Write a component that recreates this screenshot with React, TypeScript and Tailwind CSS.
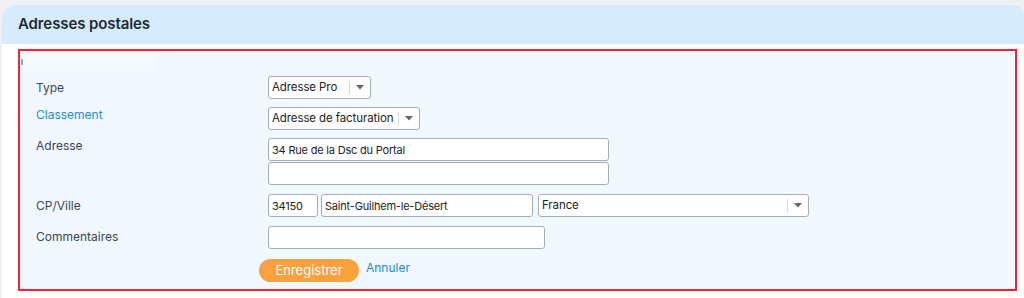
import * as React from 'react';

const labelCls = 'w-[232px] shrink-0 text-[12px] text-[#3f4550]';
const inputCls = 'h-[23px] border border-[#a9adb3] rounded-[3px] bg-white px-[3px] text-[11px] tracking-[-0.2px] text-[#222] outline-none';

function Select({ value, width }: { value: string; width: string }) {
  return (
    <div className={`flex h-[23px] items-stretch border border-[#a9adb3] rounded-[3px] bg-white ${width}`}>
      <div className="flex-1 flex items-center px-[3px] text-[11.5px] tracking-[-0.1px] text-[#222] whitespace-nowrap">{value}</div>
      <div className="w-[21px] flex items-center justify-center my-[4px] border-l border-[#d4d6da]">
        <svg width="8" height="5" viewBox="0 0 8 5">
          <path d="M0 0h8L4 4.5z" fill="#666" />
        </svg>
      </div>
    </div>
  );
}

export default function App() {
  return (
    <div className="h-[298px] w-[1024px] overflow-hidden bg-[#eef0f4] pt-[5px] pl-[2px]" style={{ fontFamily: 'Inter, "Open Sans", sans-serif' }}>
      <div className="h-full rounded-tl-[14px] rounded-tr-[10px] bg-white overflow-hidden">
        <div className="h-[39px] bg-[#d6ebfb] flex items-center pl-[16px]">
          <div className="text-[15px] font-semibold text-[#1f2937] tracking-[-0.1px]">Adresses postales</div>
        </div>
        <div className="pt-[5px] pl-[16px] pr-[7px]">
          <div className="h-[242px] border-2 border-[#f0233b] bg-[#f1f8ff] relative">
            <div className="absolute left-0 top-0 w-[137px] h-[20px] bg-[#f5faff]" />
            <div className="absolute left-[1px] top-[8px] w-[2px] h-[6px] bg-[#9aa0a8]" />
            <div className="pl-[16px] pt-[25px] flex flex-col">
              <div className="flex items-center h-[23px]">
                <div className={labelCls}>Type</div>
                <Select value="Adresse Pro" width="w-[103px]" />
              </div>
              <div className="flex items-center h-[23px] mt-[8px]">
                <div className={`${labelCls} !text-[#1c8fd0] -mt-[8px]`}>Classement</div>
                <Select value="Adresse de facturation" width="w-[152px]" />
              </div>
              <div className="flex mt-[8px]">
                <div className={`${labelCls} -mt-[1px]`}>Adresse</div>
                <div className="flex flex-col gap-[1px]">
                  <input readOnly value="34 Rue de la Dsc du Portal" className={`${inputCls} w-[341px]`} />
                  <input readOnly value="" className={`${inputCls} w-[341px]`} />
                </div>
              </div>
              <div className="flex items-center mt-[9px]">
                <div className={labelCls}>CP/Ville</div>
                <input readOnly value="34150" className={`${inputCls} w-[50px]`} />
                <input readOnly value="Saint-Guilhem-le-Désert" className={`${inputCls} w-[212px] ml-[3px]`} />
                <div className="ml-[5px]">
                  <Select value="France" width="w-[271px]" />
                </div>
              </div>
              <div className="flex items-center mt-[9px]">
                <div className={`${labelCls} -mt-[2px]`}>Commentaires</div>
                <input readOnly value="" className={`${inputCls} w-[277px]`} />
              </div>
              <div className="flex items-center mt-[10px] pl-[223px]">
                <button className="h-[23px] w-[100px] rounded-full bg-[#f9a03f] text-white text-[13px]">Enregistrer</button>
                <span className="ml-[7px] -mt-[5px] text-[12px] text-[#1c8fd0]">Annuler</span>
              </div>
            </div>
          </div>
        </div>
      </div>
    </div>
  );
}
